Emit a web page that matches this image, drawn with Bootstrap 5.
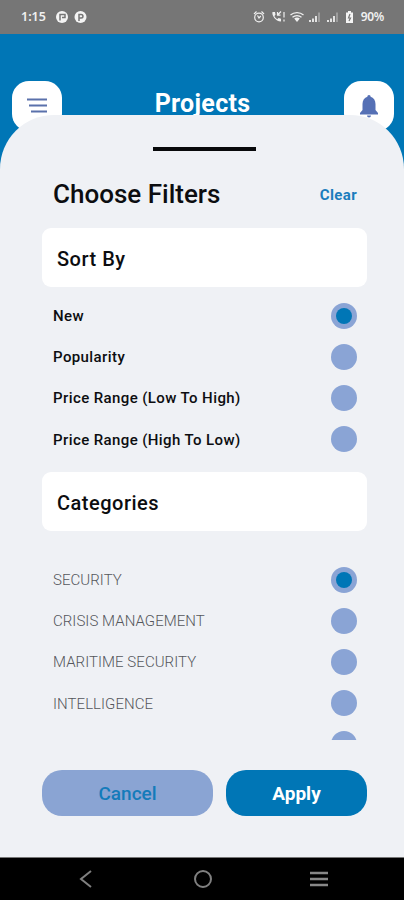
<!DOCTYPE html>
<html lang="en">
<head>
<meta charset="utf-8">
<meta name="viewport" content="width=device-width, initial-scale=1">
<title>Projects</title>
<link href="https://cdn.jsdelivr.net/npm/bootstrap@5.3.0/dist/css/bootstrap.min.css" rel="stylesheet">
<style>
body{font-family:Roboto,sans-serif;background:#0076b6;color:#0c0d10;overflow:hidden;line-height:1.2}
.phone{width:404px;height:900px}
.status-bar{height:34px;background:#767676;padding:0 20px 0 21px;color:#f0f0f0;font:600 12.5px/34px "Noto Sans",sans-serif}
.battery-text{font-size:12px;letter-spacing:-.3px}
.app-head{height:81px;padding:47px 10px 0 12px}
.tile{width:50px;height:50px;border-radius:17px;background:#fff}
.app-title{font-size:25px;font-weight:700;line-height:30px;color:#fff;margin:8px 0 0 -1px;letter-spacing:.3px}
.sheet{height:742px;background:#eff1f5;border-radius:54px 54px 0 0;padding:0 37px 0 42px}
.handle{width:103px;height:4px;background:#08090b;margin:32px 0 0 111px}
.sheet-head{height:77px;padding:11px 10px 0 11px}
.sheet-title{font-size:26px;font-weight:500}
.clear-link{font-size:15px;font-weight:700;color:#1b7dbd;letter-spacing:.35px}
.section-box{height:59px;border-radius:9px;background:#fff;padding:3px 15px 0;font-size:20px;font-weight:500;letter-spacing:.5px}
.opt{height:41.2px;flex:none;padding:0 10px 0 11px;font-size:15px;font-weight:500;letter-spacing:.4px}
.opt span:first-child:not(.dot){padding-top:1px}
.opt-light{font-weight:300;color:#55575c;letter-spacing:.05px}
.dot{width:26px;height:26px;background:#8aa4d5}
.dot.on::after{content:"";width:16px;height:16px;border-radius:50%;background:#0076b6}
.sort-list{height:185px;padding-top:8px}
.cat-list{height:209px;padding-top:28px;overflow:hidden}
.actions{margin-top:30px;gap:13px}
.pill{height:46px;border-radius:20px;border:0;font-size:19px;font-weight:500;padding:3px 0 0}
.pill-cancel{width:171px;background:#8aa4d3;color:#147bba}
.pill-apply{width:141px;background:#0076b6;color:#fff;font-weight:700}
.nav-keys{height:43px;background:#000;border-top:1px solid #777;padding:0 75px 0 79px}
</style>
<script src="https://cdn.jsdelivr.net/npm/bootstrap@5.3.0/dist/js/bootstrap.bundle.min.js"></script>
</head>
<body>
<div class="phone d-flex flex-column">
  <div class="status-bar d-flex align-items-center justify-content-between">
    <div class="d-flex align-items-center">
      <span class="clock">1:15</span>
      <svg class="ms-2" width="36" height="14" viewBox="0 0 36 14"><circle cx="8" cy="7" r="6" fill="#f4f4f4"/><circle cx="26.500" cy="7" r="6" fill="#f4f4f4"/><path d="M6 10.500V4.500h5v3H8M25 11V4.500h2.200a1.700 1.700 0 0 1 0 3.500H25" fill="none" stroke="#767676" stroke-width="1.500"/></svg>
    </div>
    <div class="d-flex align-items-center">
      <svg class="me-1" width="106" height="16" viewBox="0 0 106 16" fill="none" stroke="#f0f0f0" stroke-width="1.200">
        <circle cx="8" cy="8.500" r="4.300"/><path d="M3 5l2.500-2.500M13 5l-2.500-2.500M6.500 6.500L8 9l1.800-2"/>
        <path d="M21.500 3c-1 3 3 9.500 8.500 9.500v-2.800l-2.500-.6-1.200 1.200c-1.400-.9-2.300-2-2.900-3.300l1.100-1.200L24 3z" fill="#f0f0f0" stroke="none"/><path d="M26.500 6l3.500-3.500M26.500 3v3.200h3M33 3v5.500M33 10.500v2"/>
        <path d="M39.500 6c3.500-3.300 9.500-3.300 13 0M41.500 8.300c2.500-2.200 6.500-2.200 9 0"/><path d="M43.200 9.500c1.600-1.300 4-1.300 5.600 0L46 13z" fill="#f0f0f0" stroke="none"/>
        <g stroke-width="1.800"><path d="M59 13v-2M62 13V9.500M65 13V7"/><path d="M68 13V3.500" stroke="#a2a2a2"/><path d="M77 13v-2M80 13V9.500M83 13V7"/><path d="M86 13V3.500" stroke="#a2a2a2"/></g>
        <path d="M95 3.500h2V2h3v1.500h2V14h-7z" fill="#f4f4f4" stroke="none"/><path d="M99 5l-1.500 4h2L98 12" stroke="#767676"/>
      </svg>
      <span class="battery-text">90%</span>
    </div>
  </div>
  <header class="app-head d-flex justify-content-between align-items-start">
    <div class="tile d-flex justify-content-center align-items-start"><svg width="22" height="36" viewBox="0 0 22 36" stroke="#5a71ab" stroke-width="2"><path d="M1 18.500h20M3 24.500h18M5 30.500h16"/></svg></div>
    <h1 class="app-title mb-0">Projects</h1>
    <div class="tile d-flex justify-content-center align-items-start"><svg width="22" height="38" viewBox="0 0 22 38" fill="#5570b5"><path d="M11 14c1 0 1.600.8 1.600 1.800 3 .8 4.900 3.600 4.900 7.200v6l2.500 3v1.500H2V32l2.500-3v-6c0-3.600 1.900-6.400 4.900-7.200 0-1 .6-1.800 1.600-1.800zM9 34.500h4a2 2 0 0 1-4 0z"/></svg></div>
  </header>
  <main class="sheet position-relative">
    <div class="d-flex"><div class="handle"></div></div>
    <div class="sheet-head d-flex justify-content-between align-items-center">
      <h2 class="sheet-title mb-0">Choose Filters</h2><a class="clear-link text-decoration-none" href="#">Clear</a>
    </div>
    <div class="section-box d-flex align-items-center">Sort By</div>
    <div class="sort-list d-flex flex-column">
      <div class="opt d-flex align-items-center justify-content-between"><span>New</span><span class="dot on rounded-circle d-flex align-items-center justify-content-center"></span></div>
      <div class="opt d-flex align-items-center justify-content-between"><span>Popularity</span><span class="dot rounded-circle"></span></div>
      <div class="opt d-flex align-items-center justify-content-between"><span>Price Range (Low To High)</span><span class="dot rounded-circle"></span></div>
      <div class="opt d-flex align-items-center justify-content-between"><span>Price Range (High To Low)</span><span class="dot rounded-circle"></span></div>
    </div>
    <div class="section-box d-flex align-items-center">Categories</div>
    <div class="cat-list d-flex flex-column">
      <div class="opt opt-light d-flex align-items-center justify-content-between"><span>SECURITY</span><span class="dot on rounded-circle d-flex align-items-center justify-content-center"></span></div>
      <div class="opt opt-light d-flex align-items-center justify-content-between"><span>CRISIS MANAGEMENT</span><span class="dot rounded-circle"></span></div>
      <div class="opt opt-light d-flex align-items-center justify-content-between"><span>MARITIME SECURITY</span><span class="dot rounded-circle"></span></div>
      <div class="opt opt-light d-flex align-items-center justify-content-between"><span>INTELLIGENCE</span><span class="dot rounded-circle"></span></div>
      <div class="opt d-flex align-items-center justify-content-end"><span class="dot rounded-circle"></span></div>
    </div>
    <div class="actions d-flex"><button class="btn pill pill-cancel">Cancel</button><button class="btn pill pill-apply">Apply</button></div>
  </main>
  <nav class="nav-keys d-flex align-items-center justify-content-between">
    <svg width="14" height="18" viewBox="0 0 14 18" fill="none" stroke="#808080" stroke-width="2"><path d="M12 1L2 9l10 8"/></svg>
    <svg class="ms-1" width="20" height="20" viewBox="0 0 20 20" fill="none" stroke="#808080" stroke-width="2"><circle cx="10" cy="10" r="8"/></svg>
    <svg width="20" height="16" viewBox="0 0 20 16" stroke="#888" stroke-width="2.400"><path d="M1 2h18M1 8h18M1 14h18"/></svg>
  </nav>
</div>
</body>
</html>
